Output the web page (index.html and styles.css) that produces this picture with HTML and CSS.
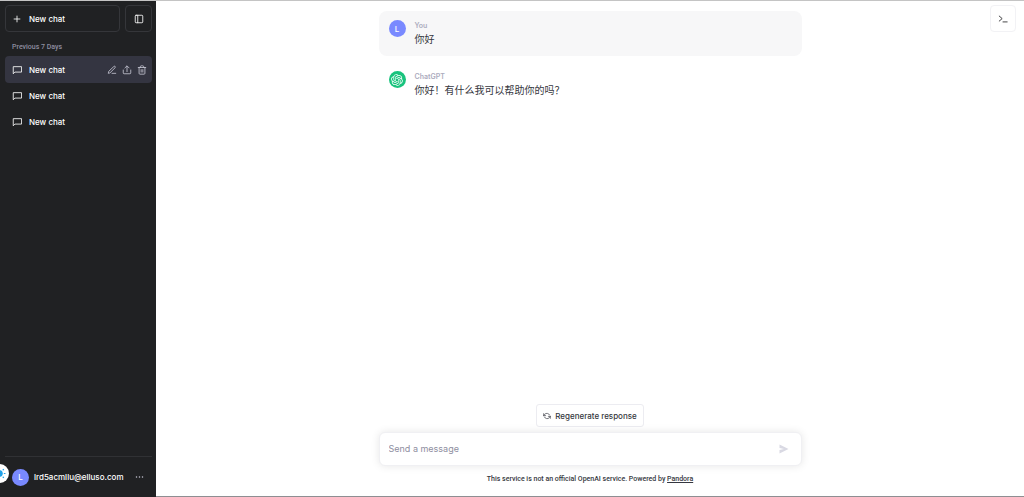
FILE: index.html
```
<!DOCTYPE html>
<html lang="en">
<head>
    <meta charset="UTF-8">
    <meta name="viewport" content="width=device-width, initial-scale=1.0">
    <title>New chat</title>
    <link rel="stylesheet" href="styles.css">
</head>
<body>
    <svg class="sprite" aria-hidden="true">
        <symbol id="icon-chat" viewBox="0 0 24 24"><path d="M22 17H7l-4 4V4h19z"/></symbol>
    </svg>

    <aside class="sidebar">
        <div class="sidebar-top">
            <button class="new-chat">
                <svg class="icon" viewBox="0 0 24 24"><path d="M12 5v14M5 12h14"/></svg>
                New chat
            </button>
            <button class="toggle" aria-label="Hide sidebar">
                <svg class="icon" viewBox="0 0 24 24"><rect x="3" y="3" width="18" height="18" rx="2"/><path d="M9 3v18"/></svg>
            </button>
        </div>

        <h2 class="group-title">Previous 7 Days</h2>
        <nav class="history">
            <div class="chat active">
                <a href="#"><svg class="icon" viewBox="0 0 24 24"><use href="#icon-chat"/></svg>New chat</a>
                <button aria-label="Rename"><svg class="icon" viewBox="0 0 24 24"><path d="M12 20h9M16.500 3.500a2.100 2.100 0 0 1 3 3L7 19l-4 1 1-4z"/></svg></button>
                <button aria-label="Share"><svg class="icon" viewBox="0 0 24 24"><path d="M3 12v7a2 2 0 0 0 2 2h14a2 2 0 0 0 2-2v-7M12 16V3M7 7l5-5 5 5"/></svg></button>
                <button aria-label="Delete"><svg class="icon" viewBox="0 0 24 24"><path d="M3 6h18M19 6v14a2 2 0 0 1-2 2H7a2 2 0 0 1-2-2V6M8 6V4a2 2 0 0 1 2-2h4a2 2 0 0 1 2 2v2M10 11v6M14 11v6"/></svg></button>
            </div>
            <div class="chat">
                <a href="#"><svg class="icon" viewBox="0 0 24 24"><use href="#icon-chat"/></svg>New chat</a>
            </div>
            <div class="chat">
                <a href="#"><svg class="icon" viewBox="0 0 24 24"><use href="#icon-chat"/></svg>New chat</a>
            </div>
        </nav>

        <div class="account">
            <button class="user">
                <span class="avatar">L</span>
                <span class="email">lrd5acmllu@elluso.com</span>
                <svg class="icon dots" viewBox="0 0 24 24"><circle cx="4" cy="12" r="2"/><circle cx="12" cy="12" r="2"/><circle cx="20" cy="12" r="2"/></svg>
            </button>
        </div>
        <button class="theme" aria-label="Theme">
            <svg viewBox="0 0 24 24"><circle cx="12" cy="12" r="5"/><path d="M12 1v3M12 20v3M1 12h3M20 12h3M4 4l2 2M18 18l2 2M4 20l2-2M18 6l2-2"/></svg>
        </button>
    </aside>

    <main class="main">
        <button class="terminal" aria-label="Console">
            <svg class="icon" viewBox="0 0 24 24"><path d="M3 5l7 6-7 6M12 19h10"/></svg>
        </button>

        <section class="thread">
            <article class="message mine">
                <span class="avatar">L</span>
                <div>
                    <h3>You</h3>
                    <p>你好</p>
                </div>
            </article>
            <article class="message">
                <span class="avatar bot">
                    <svg viewBox="0 0 41 41"><path d="M37.532 16.87a9.963 9.963 0 0 0-.856-8.184 10.078 10.078 0 0 0-10.855-4.835A9.964 9.964 0 0 0 18.306.5a10.079 10.079 0 0 0-9.614 6.977 9.967 9.967 0 0 0-6.664 4.834 10.08 10.08 0 0 0 1.24 11.817 9.965 9.965 0 0 0 .856 8.185 10.079 10.079 0 0 0 10.855 4.835 9.965 9.965 0 0 0 7.516 3.35 10.078 10.078 0 0 0 9.617-6.981 9.967 9.967 0 0 0 6.663-4.834 10.079 10.079 0 0 0-1.243-11.813ZM22.498 37.886a7.474 7.474 0 0 1-4.799-1.735c.061-.033.168-.091.237-.134l7.964-4.6a1.294 1.294 0 0 0 .655-1.134V19.054l3.366 1.944a.12.12 0 0 1 .066.092v9.299a7.505 7.505 0 0 1-7.49 7.496ZM6.392 31.006a7.471 7.471 0 0 1-.894-5.023c.06.036.162.099.237.141l7.964 4.6a1.297 1.297 0 0 0 1.308 0l9.724-5.614v3.888a.12.12 0 0 1-.048.103l-8.051 4.649a7.504 7.504 0 0 1-10.24-2.744ZM4.297 13.62A7.469 7.469 0 0 1 8.2 10.333c0 .068-.004.19-.004.274v9.201a1.294 1.294 0 0 0 .654 1.132l9.723 5.614-3.366 1.944a.12.12 0 0 1-.114.01L7.04 23.856a7.504 7.504 0 0 1-2.743-10.237Zm27.658 6.437-9.724-5.615 3.367-1.943a.121.121 0 0 1 .113-.01l8.052 4.648a7.498 7.498 0 0 1-1.158 13.528v-9.476a1.293 1.293 0 0 0-.65-1.132Zm3.35-5.043c-.059-.037-.162-.099-.236-.141l-7.965-4.6a1.298 1.298 0 0 0-1.308 0l-9.723 5.614v-3.888a.12.12 0 0 1 .048-.103l8.05-4.645a7.497 7.497 0 0 1 11.135 7.763Zm-21.063 6.929-3.367-1.944a.12.12 0 0 1-.065-.092v-9.299a7.497 7.497 0 0 1 12.293-5.756 6.94 6.94 0 0 0-.236.134l-7.965 4.6a1.294 1.294 0 0 0-.654 1.132l-.006 11.225Zm1.829-3.943 4.33-2.501 4.332 2.5v5l-4.331 2.5-4.331-2.5V18Z"/></svg>
                </span>
                <div>
                    <h3>ChatGPT</h3>
                    <p>你好！有什么我可以帮助你的吗？</p>
                </div>
            </article>
        </section>

        <footer class="bottom">
            <button class="regenerate">
                <svg class="icon" viewBox="0 0 24 24"><path d="M2 5v6h6M22 19v-6h-6M20 9A9 9 0 0 0 5 7l-3 4M22 13l-3 4A9 9 0 0 1 4 15"/></svg>
                Regenerate response
            </button>
            <form class="composer">
                <input type="text" aria-label="Message" placeholder="Send a message">
                <button type="button" aria-label="Send">
                    <svg viewBox="0 0 20 20"><path d="M1 1l18 9-18 9V12l9-2-9-2z"/></svg>
                </button>
            </form>
            <p class="note">This service is not an official OpenAI service. Powered by <a href="#">Pandora</a></p>
        </footer>
    </main>
</body>
</html>
```
FILE: styles.css
```
* { box-sizing: border-box; }
body { display: flex; height: 100vh; margin: 0; border-top: 1px solid #c4c4c4; font-family: Inter, "Noto Sans CJK SC", sans-serif; font-size: 9px; line-height: 12px; color: #353740; }
h2, h3, p { margin: 0; }
button { padding: 0; border: 0; background: none; color: inherit; font: inherit; cursor: pointer; }
a { color: inherit; }
.sprite { display: none; }
.icon { width: 10px; height: 10px; flex: none; display: block; fill: none; stroke: currentColor; stroke-width: 2; stroke-linecap: round; stroke-linejoin: round; }

/* sidebar */
.sidebar { position: relative; display: flex; flex-direction: column; flex: none; width: 156px; padding: 4px 4px 0 5px; background: #202123; color: #fff; font-size: 8px; font-weight: 500; }
.sidebar-top { display: flex; gap: 5px; }
.new-chat, .toggle { display: flex; align-items: center; height: 27px; border: 1px solid #35363a; border-radius: 4px; }
.new-chat { flex: 1; gap: 7px; padding-left: 6px; }
.toggle { justify-content: center; width: 27px; }
.new-chat:hover, .toggle:hover { background: #2b2c2f; }
.group-title { margin: 9px 0 3px; padding-left: 7px; color: #8e8ea0; font-family: Roboto, sans-serif; font-size: 7px; font-weight: 500; line-height: 12px; }
.history { display: flex; flex-direction: column; }
.chat { display: flex; align-items: center; gap: 5px; height: 26px; padding: 0 5px 0 7px; border-radius: 4px; color: #c5c5d2; }
.chat.active { height: 27px; background: #343541; }
.chat a { display: flex; align-items: center; flex: 1; gap: 7px; color: #fff; text-decoration: none; }
.account { margin-top: auto; padding: 8px 0; border-top: 1px solid #303134; }
.user { display: flex; align-items: center; gap: 5px; width: 100%; height: 24px; padding: 0 8px 0 7px; text-align: left; }
.email { flex: 1; }
.dots { width: 9px; fill: #c5c5d2; stroke: none; }
.theme { position: absolute; left: -10px; bottom: 14px; width: 19px; height: 19px; border-radius: 50%; background: #fff; }
.theme svg { display: block; width: 13px; height: 13px; margin: auto; fill: #1ea0e8; stroke: #1ea0e8; stroke-width: 2; }

.avatar { display: flex; align-items: center; justify-content: center; flex: none; width: 17px; height: 17px; border-radius: 50%; background: #7989ff; color: #fff; font-size: 8px; font-weight: 500; }
.avatar.bot { background: #19c37d; }
.avatar.bot svg { width: 12px; height: 12px; fill: #fff; }

/* conversation */
.main { position: relative; display: flex; flex-direction: column; flex: 1; padding: 10px 16px 0; border-bottom: 1px solid #8e8e92; }
.terminal { position: absolute; top: 4px; right: 8px; display: flex; align-items: center; justify-content: center; width: 26px; height: 27px; border: 1px solid #f2f2f5; border-radius: 4px; color: #202123; }
.thread, .bottom { width: 100%; max-width: 423px; margin: 0 auto; }
.thread { display: flex; flex-direction: column; gap: 6px; flex: 1; }
.message { display: flex; gap: 9px; padding: 9px 10px 8px; border-radius: 8px; }
.message.mine { background: #f7f7f8; }
.message h3 { color: #acacbe; font-size: 7px; font-weight: 600; line-height: 11px; }
.message p { font-size: 10px; line-height: 17px; }

.bottom { display: flex; flex-direction: column; align-items: center; padding-bottom: 11px; }
.regenerate { display: flex; align-items: center; gap: 4px; height: 23px; margin-bottom: 5px; padding: 0 6px; border: 1px solid #ececf1; border-radius: 3px; font-size: 8px; font-weight: 500; }
.regenerate .icon { width: 8px; height: 8px; }
.composer { display: flex; align-items: center; width: 100%; height: 34px; padding: 0 12px 0 9px; border: 1px solid #f0f0f3; border-radius: 6px; background: #fff; box-shadow: 0 0 8px rgba(0, 0, 0, 0.1); }
.composer input { flex: 1; min-width: 0; padding: 0; border: 0; outline: 0; background: none; font: inherit; }
.composer input::placeholder { color: #8e8ea0; opacity: 1; }
.composer svg { display: block; width: 10px; height: 10px; fill: #d9d9e3; }
.note { margin-top: 7px; font-family: Roboto, sans-serif; font-size: 7px; font-weight: 500; }
```
